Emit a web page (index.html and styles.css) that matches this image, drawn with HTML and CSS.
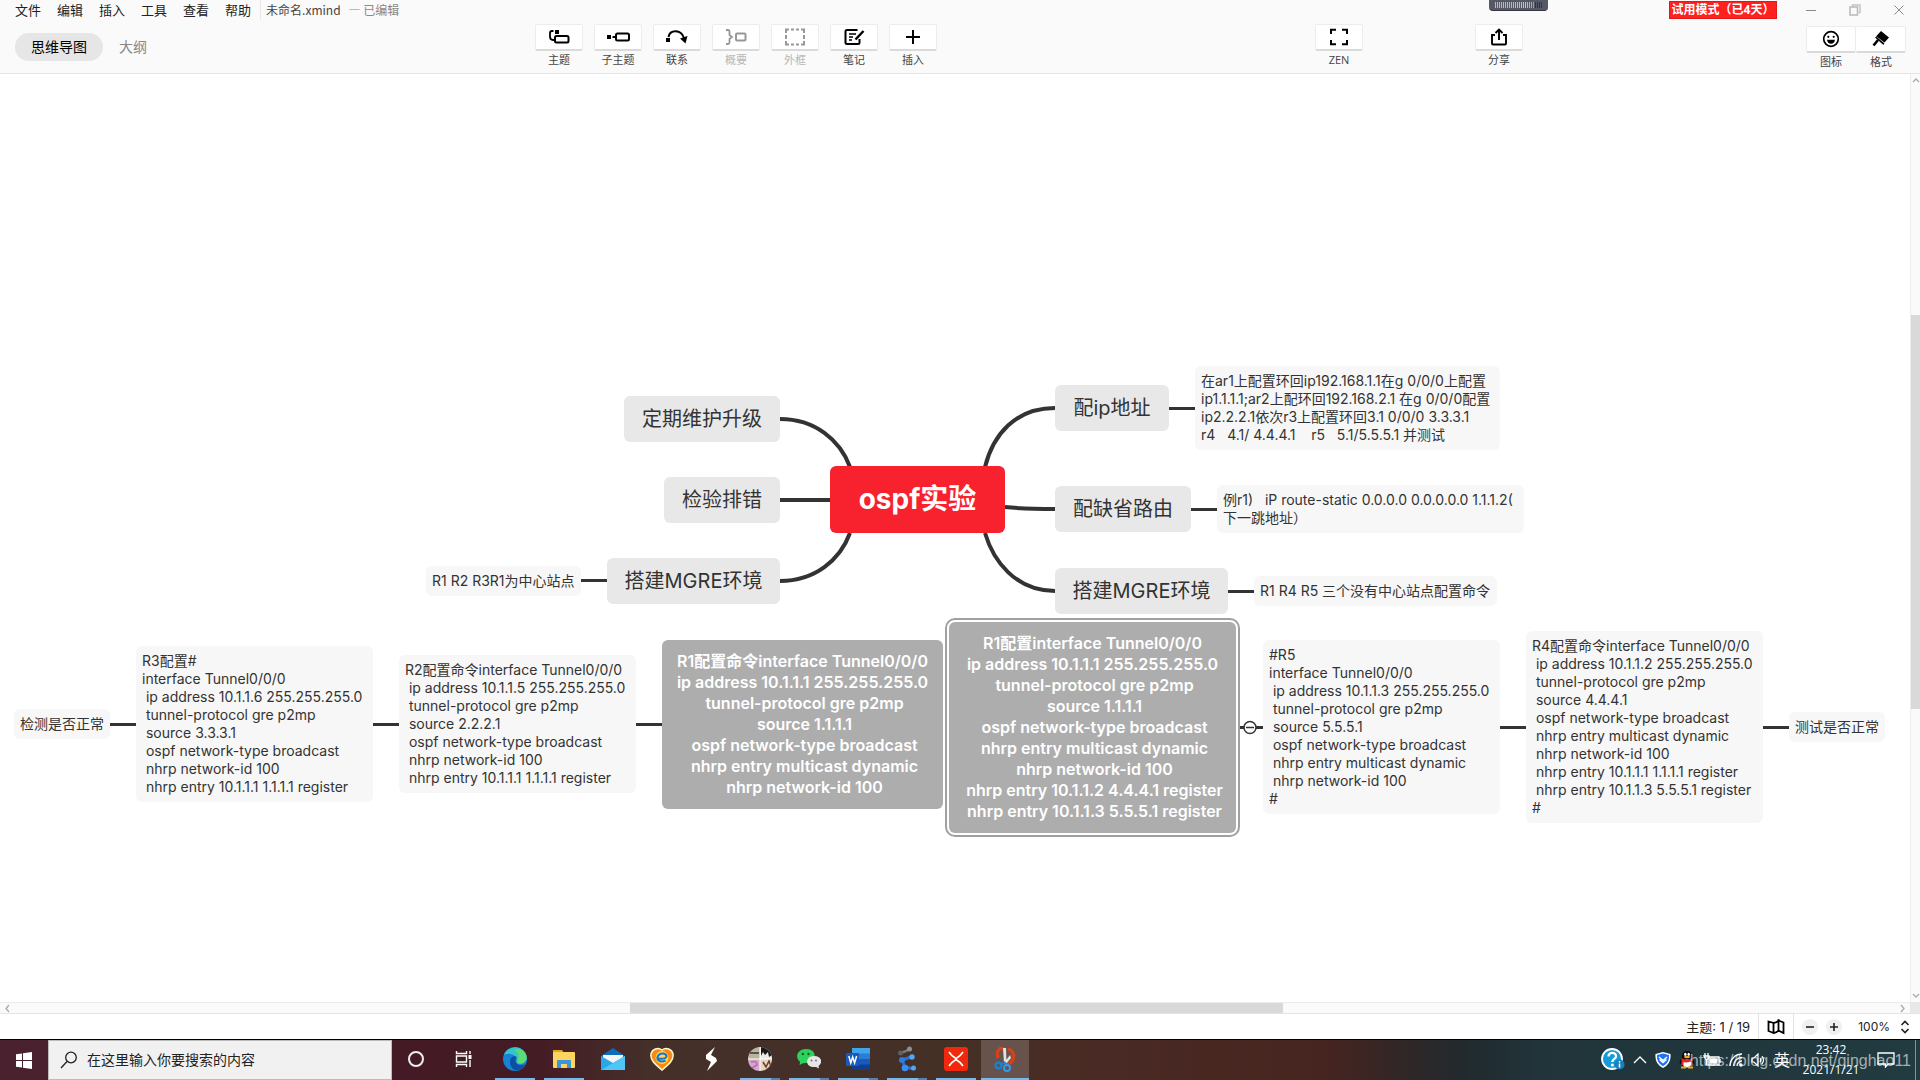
FILE: index.html
```html
<!DOCTYPE html>
<html lang="zh-CN">
<head>
<meta charset="utf-8">
<title>未命名.xmind</title>
<link rel="stylesheet" href="styles.css">
</head>
<body>
<header class="header">
  <div class="titlebar">
    <nav class="menus">
      <button>文件</button><button>编辑</button><button>插入</button><button>工具</button><button>查看</button><button>帮助</button>
    </nav>
    <div class="doc"><span>未命名.xmind</span><span class="edited">— 已编辑</span></div>
    <div class="meter" aria-hidden="true"><i></i></div>
    <button class="trial">试用模式（已4天）</button>
    <div class="window-buttons">
      <button aria-label="最小化"><svg width="12" height="12" viewBox="0 0 12 12"><path d="M1 6.500h10" stroke="#8a8a8a"/></svg></button>
      <button aria-label="还原"><svg width="12" height="12" viewBox="0 0 12 12"><path d="M3.500 2.500V1h7.500v7.500H9.500" fill="none" stroke="#c4c4c4" stroke-width="1.500"/><path d="M1 3h7.500v8H1z" fill="none" stroke="#b8b8b8" stroke-width="1.500"/></svg></button>
      <button aria-label="关闭"><svg width="12" height="12" viewBox="0 0 12 12"><path d="M1.500 1.500l9 9M10.500 1.500l-9 9" stroke="#8a8a8a"/></svg></button>
    </div>
  </div>
  <div class="toolbar">
    <div class="views"><button class="view active">思维导图</button><button class="view">大纲</button></div>
    <div class="tools">
      <button class="tool"><span class="key"><svg width="22" height="18" viewBox="0 0 22 18"><path d="M5.500 3H4q-2 0-2 2v3.500q0 3.500 3 3.500h1" fill="none" stroke="#000" stroke-width="1.800"/><rect x="7" y="2" width="4" height="4"/><rect x="7" y="8" width="13.500" height="6.500" rx="1.500" fill="none" stroke="#000" stroke-width="2"/></svg></span>主题</button>
      <button class="tool"><span class="key"><svg width="24" height="18" viewBox="0 0 24 18"><rect x="1" y="7" width="4" height="4"/><path d="M6.500 9H10" stroke="#000" stroke-width="2"/><rect x="10" y="5.500" width="13" height="7" rx="1.500" fill="none" stroke="#000" stroke-width="2"/></svg></span>子主题</button>
      <button class="tool"><span class="key"><svg width="22" height="18" viewBox="0 0 22 18"><rect x="0" y="10" width="4" height="4"/><path d="M2.500 9C4 1.500 15 1 18 10" fill="none" stroke="#000" stroke-width="2"/><path d="M14 10.500l7.500-2.500-2 7.500z"/></svg></span>联系</button>
      <button class="tool" disabled><span class="key"><svg width="22" height="18" viewBox="0 0 22 18"><path d="M1 2h2q1.500 0 1.500 1.500V7L7 9l-2.500 2v3.500Q4.500 16 3 16H1" fill="none" stroke="#000" stroke-width="1.800"/><rect x="11" y="5.500" width="9.500" height="7" rx="1" fill="none" stroke="#000" stroke-width="2"/></svg></span>概要</button>
      <button class="tool" disabled><span class="key"><svg width="22" height="18" viewBox="0 0 22 18"><path d="M5 1.500H2V5M2 7v4M2 13v3.500h3M7 16.500h3M12 16.500h3M17 16.500h3V13M20 11V7M20 5V1.500h-3M15 1.500h-3M10 1.500H7" fill="none" stroke="#000" stroke-width="2"/></svg></span>外框</button>
      <button class="tool"><span class="key"><svg width="22" height="18" viewBox="0 0 22 18"><path d="M14.500 2H4Q2.500 2 2.500 3.500v11Q2.500 16 4 16h11q1.500 0 1.500-1.500V11" fill="none" stroke="#000" stroke-width="2"/><path d="M6 6h7M6 9h4M6 12h3" stroke="#000" stroke-width="1.700"/><path d="M20.500 3l-8 8.500" stroke="#000" stroke-width="2.400"/></svg></span>笔记</button>
      <button class="tool"><span class="key"><svg width="18" height="18" viewBox="0 0 18 18"><path d="M9 2v14M2 9h14" stroke="#000" stroke-width="2"/></svg></span>插入</button>
    </div>
    <button class="tool"><span class="key"><svg width="20" height="18" viewBox="0 0 20 18"><path d="M7 1.800H2V6M13 1.800h5V6M2 12v4.200h5M18 12v4.200h-5" fill="none" stroke="#000" stroke-width="2"/></svg></span>ZEN</button>
    <button class="tool"><span class="key"><svg width="18" height="18" viewBox="0 0 18 18"><path d="M5 7H2v8.500q0 1 1 1h12q1 0 1-1V7h-3M9 12V2M5.500 5L9 1.500 12.500 5" fill="none" stroke="#000" stroke-width="1.900"/></svg></span>分享</button>
    <div class="panels">
      <button class="tool"><span class="key"><svg width="18" height="18" viewBox="0 0 18 18"><circle cx="9" cy="9" r="7.300" fill="none" stroke="#000" stroke-width="1.700"/><circle cx="6.300" cy="6.800" r="1.100"/><circle cx="11.700" cy="6.800" r="1.100"/><path d="M5 9.800h8q-.6 4-4 4t-4-4z"/></svg></span>图标</button>
      <button class="tool"><span class="key"><svg width="18" height="18" viewBox="0 0 18 18"><path d="M9 1l8 6.500-5 5.500-8-6.500zM3 7.500L11.500 15l1-2.500-8-6z"/><path d="M6 10l-4.500 5.500" stroke="#000" stroke-width="2.600"/></svg></span>格式</button>
    </div>
  </div>
</header>

<main class="workspace">
  <div class="board">
    <svg class="links" fill="none" stroke="#333">
      <g stroke-width="4">
        <path d="M780 345C815 345 840 366 850 393M780 426h50M780 507C815 507 840 486 850 459M985 393C993 361 1015 334 1055 334M1005 433Q1025 435 1055 435M985 459C993 486 1015 517 1055 517"/>
      </g>
      <path stroke-width="3" d="M581 506.500h26M1169 334.500h26M1191 435.500h26M1228 517.500h26M110 650.500h26M373 650.500h26M636 650.500h26M1240 653.500h23M1500 653.500h26M1763 653.500h26"/>
      <circle cx="1250" cy="653.500" r="6" fill="#fff" stroke-width="1.500"/>
      <path d="M1246 653.500h8" stroke-width="1.500"/>
    </svg>
    <div class="node central n-root">ospf实验</div>
    <div class="node topic n-upgrade">定期维护升级</div>
    <div class="node topic n-check">检验排错</div>
    <div class="node topic n-mgre-left">搭建MGRE环境</div>
    <div class="node topic n-ip">配ip地址</div>
    <div class="node topic n-route">配缺省路由</div>
    <div class="node topic n-mgre-right">搭建MGRE环境</div>
    <div class="node leaf n-hub">R1 R2 R3R1为中心站点</div>
    <div class="node leaf n-ip-note">在ar1上配置环回ip192.168.1.1在g 0/0/0上配置
ip1.1.1.1;ar2上配环回192.168.2.1 在g 0/0/0配置
ip2.2.2.1依次r3上配置环回3.1 0/0/0 3.3.3.1
r4   4.1/ 4.4.4.1    r5   5.1/5.5.5.1 并测试</div>
    <div class="node leaf n-route-note">例r1)   iP route-static 0.0.0.0 0.0.0.0.0 1.1.1.2(
下一跳地址）</div>
    <div class="node leaf n-spokes">R1 R4 R5 三个没有中心站点配置命令</div>
    <div class="node leaf n-test-left">检测是否正常</div>
    <div class="node leaf n-r3">R3配置#
interface Tunnel0/0/0
 ip address 10.1.1.6 255.255.255.0
 tunnel-protocol gre p2mp
 source 3.3.3.1
 ospf network-type broadcast
 nhrp network-id 100
 nhrp entry 10.1.1.1 1.1.1.1 register</div>
    <div class="node leaf n-r2">R2配置命令interface Tunnel0/0/0
 ip address 10.1.1.5 255.255.255.0
 tunnel-protocol gre p2mp
 source 2.2.2.1
 ospf network-type broadcast
 nhrp network-id 100
 nhrp entry 10.1.1.1 1.1.1.1 register</div>
    <div class="node floating n-r1-left">R1配置命令interface Tunnel0/0/0
ip address 10.1.1.1 255.255.255.0
 tunnel-protocol gre p2mp
 source 1.1.1.1
 ospf network-type broadcast
 nhrp entry multicast dynamic
 nhrp network-id 100</div>
    <div class="node floating selected n-r1-right">R1配置interface Tunnel0/0/0
ip address 10.1.1.1 255.255.255.0
 tunnel-protocol gre p2mp
 source 1.1.1.1
 ospf network-type broadcast
 nhrp entry multicast dynamic
 nhrp network-id 100
 nhrp entry 10.1.1.2 4.4.4.1 register
 nhrp entry 10.1.1.3 5.5.5.1 register</div>
    <div class="node leaf n-r5">#R5
interface Tunnel0/0/0
 ip address 10.1.1.3 255.255.255.0
 tunnel-protocol gre p2mp
 source 5.5.5.1
 ospf network-type broadcast
 nhrp entry multicast dynamic
 nhrp network-id 100
#</div>
    <div class="node leaf n-r4">R4配置命令interface Tunnel0/0/0
 ip address 10.1.1.2 255.255.255.0
 tunnel-protocol gre p2mp
 source 4.4.4.1
 ospf network-type broadcast
 nhrp entry multicast dynamic
 nhrp network-id 100
 nhrp entry 10.1.1.1 1.1.1.1 register
 nhrp entry 10.1.1.3 5.5.5.1 register
#</div>
    <div class="node leaf n-test-right">测试是否正常</div>
  </div>
  <div class="scroll vertical">
    <svg width="8" height="12" viewBox="0 0 8 12"><path d="M1 8l3-3 3 3"/></svg>
    <div class="track"><span></span><i></i><span></span></div>
    <svg width="8" height="12" viewBox="0 0 8 12"><path d="M1 4l3 3 3-3"/></svg>
  </div>
  <div class="scroll horizontal">
    <svg width="14" height="9" viewBox="0 0 14 9"><path d="M9 1L6 4.500 9 8"/></svg>
    <div class="track"><span></span><i></i><span></span></div>
    <svg width="14" height="9" viewBox="0 0 14 9"><path d="M5 1l3 3.500L5 8"/></svg>
  </div>
  <div class="corner"></div>
</main>

<footer class="status">
  <span class="count">主题: 1 / 19</span>
  <button class="map-button" aria-label="导航图"><svg width="18" height="16" viewBox="0 0 18 16"><path d="M1.500 2.500L6.500 4v10l-5-2zM6.500 4q3 0 5-2.500v10q-2 2.500-5 2.500M11.500 1.500l5 2V14l-5-2.500z" fill="none" stroke="#000" stroke-width="1.800"/></svg></button>
  <button class="zoom" aria-label="缩小"><svg width="10" height="10" viewBox="0 0 10 10"><path d="M1 5h8" stroke="#222" stroke-width="1.600"/></svg></button>
  <button class="zoom" aria-label="放大"><svg width="10" height="10" viewBox="0 0 10 10"><path d="M1 5h8M5 1v8" stroke="#222" stroke-width="1.600"/></svg></button>
  <button class="percent">100%<svg width="10" height="14" viewBox="0 0 10 14"><path d="M1.500 5L5 1.500 8.500 5M1.500 9L5 12.500 8.500 9" fill="none" stroke="#222" stroke-width="1.600"/></svg></button>
</footer>

<div class="taskbar">
  <button class="start" aria-label="开始"><svg width="16" height="17" viewBox="0 0 16 17" fill="#fff"><path d="M0 2.300L6 1.500V8H0zM7 1.300L16 0v8H7zM0 9h6v6.500l-6-.8zM7 9h9v8l-9-1.300z"/></svg></button>
  <label class="search"><svg width="18" height="18" viewBox="0 0 18 18" fill="none" stroke="#222" stroke-width="1.300"><circle cx="11" cy="6.500" r="5.300"/><path d="M7 10.500L1 17"/></svg><input type="text" placeholder="在这里输入你要搜索的内容" aria-label="搜索"></label>
  <button class="task" aria-label="Cortana"><svg width="18" height="18" viewBox="0 0 18 18"><circle cx="9" cy="9" r="7" fill="none" stroke="#eee" stroke-width="2"/></svg></button>
  <button class="task" aria-label="任务视图"><svg width="18" height="18" viewBox="0 0 18 18" fill="none" stroke="#fff" stroke-width="1.400"><path d="M1.500 1v2.500h10V1M1.500 17v-2.500h10V17M1.500 6h10v6h-10zM15 1v3M15 10v7"/><path d="M15 5v4" stroke-width="3"/></svg></button>
  <div class="apps">
    <button class="task open" aria-label="Edge"><svg width="24" height="26" viewBox="0 0 24 26"><circle cx="12" cy="13" r="12" fill="#1683d8"/><path d="M1 9C5-1 20-2 23.500 10c1 6-3 8-7 8-3 0-4-2-2.500-4C14 9 6 6 1 9z" fill="#37c6c8"/><path d="M15 3c6 1 9 5 8.600 9-.4 4-4 6-7.600 5-3-1-1-3-.5-5 1-4-1-6-4-8z" fill="#5fdc6e"/><path d="M7 16c0-5 4-7 7-5-2 1-3 6 2 8 3 1 6-1 6.500-1-3 6-8 7-11 6-3-2-4.500-4-4.500-8z" fill="#0d4fa0"/></svg></button>
    <button class="task open" aria-label="文件资源管理器"><svg width="24" height="20" viewBox="0 0 24 20"><path d="M1 1h9l2 3H1z" fill="#e8a317"/><rect x="1" y="3" width="22" height="16" rx="1" fill="#fcd45f"/><path d="M5 19v-7q0-1 1-1h12q1 0 1 1v7h-4v-4H9v4z" fill="#3c95db"/></svg></button>
    <button class="task" aria-label="邮件"><svg width="24" height="22" viewBox="0 0 24 22"><path d="M0 8L12 0l12 8v14H0z" fill="#0f6cbd"/><path d="M2 7h20v10H2z" fill="#f4f4f4"/><path d="M0 8l12 7L24 8v14H0z" fill="#28a8ea"/><path d="M0 22L24 8v14z" fill="#4fc6f5"/></svg></button>
    <button class="task" aria-label="浏览器"><svg width="24" height="24" viewBox="0 0 24 24"><path d="M12 23C5 17 0 13 1 7c1-5 7-7 11-4 4-3 10-1 11 4 1 6-4 10-11 16z" fill="#f88a12" stroke="#fff3cf" stroke-width="1.500"/><circle cx="12" cy="10.500" r="6.500" fill="#ffd44b"/><path d="M8 11.500q7.500 1 8.500-2c0-3.500-6-4.500-8.500-.5-2 4 2 7 7.500 4.500" fill="none" stroke="#1775cf" stroke-width="2"/></svg></button>
    <button class="task" aria-label="Steam++"><svg width="12" height="24" viewBox="0 0 12 24"><path d="M10 0L1 8v4l5 3-4 9 10-10-1-3-5-3z" fill="#fff"/></svg></button>
    <button class="task open multi" aria-label="相册"><svg width="24" height="24" viewBox="0 0 24 24"><clipPath id="round"><circle cx="12" cy="12" r="12"/></clipPath><g clip-path="url(#round)"><path fill="#b9b59c" d="M0 0h12v12H0z"/><path fill="#e9e9e9" d="M12 0h12v12H12z"/><path fill="#d8a5cf" d="M0 12h12v12H0z"/><path fill="#e7d2bc" d="M12 12h12v12H12z"/><path fill="#555" d="M2 5h9v2H2z"/><path fill="#171717" d="M13 0h9l2 8-3 2-1-5-3 3-2-3-2 4z"/><path d="M3 15q6-2 6 3l-5 3" fill="none" stroke="#b070b0" stroke-width="1.500"/><path d="M15 15l3 5 3-6 2 6" fill="none" stroke="#6d3c2f" stroke-width="1.500"/><path d="M12 0v24M0 12h24" stroke="#fff"/></g></svg></button>
    <button class="task open multi" aria-label="微信"><svg width="24" height="20" viewBox="0 0 24 20"><path d="M9 0c12 0 11 14 0 14l-3 .3L2.500 16l.6-3C-3 8 1 0 9 0z" fill="#2ed15c"/><circle cx="5.800" cy="5" r="1.200" fill="#145e2c"/><circle cx="11.500" cy="5" r="1.200" fill="#145e2c"/><path d="M17 7c8 0 9 7 4.500 10l.5 2.500-3-1.500C7 19 8 7 17 7z" fill="#e6e6e6"/><circle cx="14.500" cy="11.500" r="1" fill="#777"/><circle cx="19" cy="11.500" r="1" fill="#777"/></svg></button>
    <button class="task open multi" aria-label="Word"><svg width="24" height="22" viewBox="0 0 24 22"><path fill="#41a5ee" d="M6 0h18v6H6z"/><path fill="#2b7cd3" d="M6 5.500h18V11H6z"/><path fill="#185abd" d="M6 11h18v6H6z"/><path fill="#103f91" d="M6 16.500h18V22H6z"/><rect y="5" width="13" height="13" rx="1" fill="#185abd"/><path d="M2.800 8l2 7 1.900-6 1.900 6 2-7" fill="none" stroke="#fff" stroke-width="1.500"/></svg></button>
    <button class="task open multi" aria-label="eNSP"><svg width="20" height="26" viewBox="0 0 20 26"><path d="M3 7q5-1 10-4" stroke="#777" stroke-width="2.500"/><circle cx="3.500" cy="7" r="2.500" fill="#5d6165"/><circle cx="12.500" cy="3" r="2.500" fill="#8c9093"/><path d="M14 11L5 14l3 7 9 2" fill="none" stroke="#2d6fd0" stroke-width="3"/><circle cx="15" cy="11" r="2.700" fill="#59a4f2"/><circle cx="5" cy="14" r="3" fill="#2d7de0"/><circle cx="8" cy="22" r="3.300" fill="#3b8dee"/><circle cx="16.500" cy="22" r="2.500" fill="#59a4f2"/></svg></button>
    <button class="task open" aria-label="XMind"><svg width="24" height="24" viewBox="0 0 24 24"><rect width="24" height="24" rx="3" fill="#f2280c"/><path d="M5 5q2 3.500 7 6.500 5-3 7-6.500M5 19q2-3.500 7-6.500 5 3 7 6.500" fill="none" stroke="#fff" stroke-width="1.600"/></svg></button>
    <button class="task open current" aria-label="截图工具"><svg width="22" height="26" viewBox="0 0 22 26"><path d="M4 12C2 5 5 1 10 3M14 3c8 2 8 15-3 15" fill="none" stroke="#d0431c" stroke-width="3.500"/><path d="M9 2l1 15h2.500L12 2zM16 9l-6 8 1.500 1.500L17 12z" fill="#e2e2e2"/><path d="M11 16l-4 3M10 16l4 4" stroke="#1683d8" stroke-width="2"/><circle cx="4.500" cy="19.500" r="3" fill="none" stroke="#1683d8" stroke-width="2"/><circle cx="13" cy="22" r="3" fill="none" stroke="#2c9cf0" stroke-width="2"/></svg></button>
  </div>
  <div class="tray">
    <svg width="24" height="24" viewBox="0 0 24 24"><circle cx="11" cy="11" r="10" fill="#159bd7" stroke="#fff" stroke-width="1.800"/><path d="M7.500 8.500c0-5 8-4.500 7.500 0-.2 2.500-3.700 2.500-3.700 5.500" fill="none" stroke="#fff" stroke-width="2.300"/><circle cx="11.300" cy="17" r="1.500" fill="#fff"/><circle cx="18.500" cy="16.500" r="5" fill="#1682bd"/><path d="M18.500 15.500v4M18.500 13v1.500" stroke="#fff" stroke-width="1.500"/></svg>
    <svg width="14" height="8" viewBox="0 0 14 8"><path d="M1 7l6-6 6 6" fill="none" stroke="#fff" stroke-width="1.400"/></svg>
    <svg width="16" height="16" viewBox="0 0 16 16"><path d="M8 0l7.500 2q1 10-7.500 14Q-.5 12 .5 2z" fill="#fff"/><path d="M8 1.500l6 1.600q.7 7.600-6 11.200Q1.300 10.700 2 3.100z" fill="#1e73f0"/><path d="M4 5l4 3.500L12 5M4.500 7.500L8 10.500l3.500-3" fill="none" stroke="#fff" stroke-width="1.400"/></svg>
    <svg width="16" height="18" viewBox="0 0 16 18"><path d="M8 0c5 0 5 5 5 7 2 2 3 5 2 6l-2-1v3H3v-3l-2 1c-1-1 0-4 2-6 0-2 0-7 5-7z" fill="#0b0b0b"/><ellipse cx="8" cy="12.500" rx="4.300" ry="4" fill="#fff"/><path d="M2.500 7q5.500 3 11 0v2.500q-5 3-9 1.500v3h-2z" fill="#e3242b"/><ellipse cx="6.300" cy="3.300" rx="1.200" ry="1.600" fill="#fff"/><ellipse cx="9.700" cy="3.300" rx="1.200" ry="1.600" fill="#fff"/><ellipse cx="8" cy="6" rx="3" ry="1.200" fill="#f7a81b"/><path d="M2 16.500h5M9 16.500h5" stroke="#f7a81b" stroke-width="2"/></svg>
    <svg width="18" height="14" viewBox="0 0 18 14" fill="none" stroke="#fff" stroke-width="1.300"><path d="M5 4h11v8H5z"/><path d="M7 6h7v4H7z" fill="#fff"/><path d="M17 6v4M2 0v3M5 0v3M1 3h5v2L3.500 7zM3.500 7v5"/></svg>
    <svg width="14" height="14" viewBox="0 0 14 14" fill="none" stroke="#fff" stroke-width="1.300"><path d="M1 13A12 12 0 0 1 13 1M4.500 13A8.500 8.500 0 0 1 13 4.500M8 13a5 5 0 0 1 5-5"/><circle cx="12" cy="12" r="1" fill="#fff"/></svg>
    <svg width="14" height="14" viewBox="0 0 14 14" fill="none" stroke="#fff" stroke-width="1.200"><path d="M1 5h2l4-4v12L3 9H1zM9 5q1.500 2 0 4M11 3q3 4 0 8"/></svg>
    <span class="ime">英</span>
    <time class="clock"><span>23:42</span><span>2021/1/21</span></time>
    <svg class="notice" width="18" height="16" viewBox="0 0 18 16"><path d="M1 1h16v11h-6l-2.500 3V12H1z" fill="none" stroke="#fff" stroke-width="1.300"/></svg>
    <i class="peek"></i>
  </div>
  <div class="watermark">https://blog.csdn.net/qinghao11</div>
</div>
</body>
</html>
```
FILE: styles.css
```css
* { box-sizing: border-box; }
html, body { height: 100%; }
body {
  margin: 0;
  display: flex;
  flex-direction: column;
  overflow: hidden;
  background: #fff;
  color: #222;
  font: 13px/20px "Open Sans", "Noto Sans CJK SC", sans-serif;
}
button { margin: 0; padding: 0; border: 0; background: none; color: inherit; font: inherit; white-space: nowrap; }
svg { display: block; flex: none; }

/* header */
.header { flex: none; background: #fafafa; border-bottom: 1px solid #e4e4e4; }
.titlebar { display: flex; align-items: flex-start; height: 20px; }
.menus { display: flex; gap: 16px; padding-left: 15px; }
.doc { display: flex; gap: 8px; margin-left: 9px; padding-left: 5px; border-left: 1px solid #e8e8e8; font-family: "Noto Sans CJK SC", sans-serif; font-size: 12px; color: #444; }
.edited { color: #888; }
.meter { width: 59px; height: 11px; margin-left: auto; margin-right: 121px; padding: 2px 6px; border-radius: 0 0 4px 4px; background: #565865; border-bottom: 1px solid #353743; }
.meter i { display: block; height: 6px; background: repeating-linear-gradient(90deg, transparent 0 1px, #565865 1px 2px), linear-gradient(90deg, #62e0e0, #7fdc8c 40%, #e8c860 65%, #e87a50 84%, #33353d 85%); }
.trial { width: 108px; height: 18px; margin-top: 1px; background: #ff2020; border: 1px solid #e01818; color: #fff; font-size: 12px; font-weight: 700; line-height: 16px; overflow: hidden; }
.window-buttons { display: flex; gap: 32px; padding: 4px 15px 0 28px; }
.toolbar { display: grid; grid-template-columns: 535fr 780fr 160fr 331fr 114fr; height: 53px; padding-top: 4px; align-items: start; justify-items: start; }
.views { display: flex; padding: 9px 0 0 15px; }
.view { height: 28px; padding: 0 16px; border-radius: 14px; color: #888; font-size: 14px; }
.view.active { background: #e6e6e6; color: #000; }
.tools { display: flex; gap: 11px; }
.tool { display: flex; flex-direction: column; align-items: center; color: #444; font-size: 11px; line-height: 18px; }
.key { display: flex; align-items: center; justify-content: center; width: 48px; height: 27px; background: #fff; border: 1px solid #ececec; border-bottom: 2px solid #dadada; border-radius: 2px; }
.tool:disabled { color: #b8b8b8; }
.tool:disabled svg { opacity: .4; }
.panels { display: flex; padding-top: 2px; }
.panels .key { width: 50px; }
.panels .tool + .tool .key { border-left: 0; }

/* canvas */
.workspace { flex: 1; min-height: 0; display: grid; grid-template: minmax(0, 1fr) 11px / minmax(0, 1fr) 10px; }
.board { position: relative; overflow: hidden; font-family: Inter, "Noto Sans CJK SC", sans-serif; color: #333; }
.links { position: absolute; inset: 0; width: 100%; height: 100%; }
.node { position: absolute; white-space: pre; border-radius: 6px; }
.leaf { padding: 6px; background: #f7f7f7; font-size: 14px; line-height: 18px; }
.topic { padding: 8px 0; background: #e8e8e8; text-align: center; font-size: 20px; line-height: 30px; }
.central { padding: 13px 0; background: #f8222e; color: #fff; text-align: center; font-size: 28px; font-weight: 700; line-height: 41px; }
.floating { padding: 11px 0; background: #adadad; color: #fff; text-align: center; font-size: 16px; font-weight: 600; line-height: 21px; }
.selected { outline: 2px solid #a0a0a0; outline-offset: 2px; }
.n-root { left: 830px; top: 392px; width: 175px; }
.n-upgrade { left: 624px; top: 322px; width: 156px; }
.n-check { left: 664px; top: 403px; width: 116px; }
.n-mgre-left { left: 607px; top: 484px; width: 173px; }
.n-ip { left: 1055px; top: 311px; width: 114px; }
.n-route { left: 1055px; top: 412px; width: 136px; }
.n-mgre-right { left: 1055px; top: 494px; width: 173px; }
.n-hub { left: 426px; top: 492px; width: 155px; }
.n-ip-note { left: 1195px; top: 292px; width: 305px; }
.n-route-note { left: 1217px; top: 411px; width: 307px; }
.n-spokes { left: 1254px; top: 502px; width: 243px; }
.n-test-left { left: 14px; top: 635px; width: 96px; }
.n-r3 { left: 136px; top: 572px; width: 237px; }
.n-r2 { left: 399px; top: 581px; width: 237px; }
.n-r1-left { left: 662px; top: 566px; width: 281px; }
.n-r1-right { left: 949px; top: 548px; width: 287px; }
.n-r5 { left: 1263px; top: 566px; width: 237px; }
.n-r4 { left: 1526px; top: 557px; width: 237px; }
.n-test-right { left: 1789px; top: 638px; width: 96px; }

.scroll { display: flex; background: #fafafa; }
.scroll svg { fill: none; stroke: #aaa; stroke-width: 1.3; }
.vertical { flex-direction: column; align-items: center; border-left: 1px solid #ececec; }
.horizontal { align-items: center; border-top: 1px solid #ececec; }
.track { flex: 1; display: flex; align-self: stretch; }
.vertical .track { flex-direction: column; }
.track i { background: #d9d9d9; }
.vertical .track span:first-child { flex: 229; }
.vertical .track i { flex: 395; }
.vertical .track span:last-child { flex: 281; }
.horizontal .track span:first-child { flex: 616; }
.horizontal .track i { flex: 653; }
.horizontal .track span:last-child { flex: 613; }
.corner { background: #e8e8e8; }

/* status bar */
.status { flex: none; display: flex; align-items: center; justify-content: flex-end; height: 26px; border-top: 1px solid #e4e4e4; background: #fff; font-family: Inter, "Noto Sans CJK SC", sans-serif; font-size: 12px; }
.count { margin-right: 8px; font-size: 13px; }
.map-button { display: flex; align-items: center; justify-content: center; align-self: stretch; width: 36px; margin-right: 8px; border: solid #e4e4e4; border-width: 0 1px; }
.zoom { display: flex; align-items: center; justify-content: center; width: 16px; height: 16px; margin-right: 8px; border-radius: 50%; background: #f0f0f0; }
.percent { display: flex; align-items: center; gap: 10px; padding: 0 10px 0 8px; }

/* taskbar */
.taskbar {
  position: relative;
  flex: none;
  display: flex;
  height: 41px;
  border-top: 1px solid #000;
  background: linear-gradient(90deg, #4a222f, #431a25 20%, #441c24 28%, #44302a 34%, #453026 50%, #4a2a24 58%, #46241f 69%, #22292d 76%, #20343a 80%, #213b40);
  color: #fff;
}
.start { display: flex; align-items: center; justify-content: center; width: 48px; }
.search { display: flex; align-items: center; gap: 9px; width: 344px; padding-left: 11px; background: #f1f1f1; border: 1px solid #bbb; }
.search input { flex: 1; min-width: 0; padding: 0; border: 0; outline: 0; background: none; font: 14px/20px "Open Sans", "Noto Sans CJK SC", sans-serif; }
.search input::placeholder { color: #222; opacity: 1; }
.task { display: flex; align-items: center; justify-content: center; width: 48px; border-bottom: 2px solid transparent; }
.apps { display: flex; gap: 1px; margin-left: 3px; }
.open { background: linear-gradient(#76b9ed, #76b9ed) center bottom / 40px 2px no-repeat border-box; }
.multi { background-image: linear-gradient(90deg, #76b9ed 31px, #5484ad 31px); }
.current { background: linear-gradient(#76b9ed, #76b9ed) center bottom / 100% 2px no-repeat border-box, #67524c; }
.tray { display: flex; align-items: center; gap: 8px; margin-left: auto; padding-right: 4px; }
.ime { margin: 0 3px 0 1px; font-size: 16px; }
.clock { display: flex; flex-direction: column; align-items: center; width: 60px; margin-right: 8px; font-size: 12px; }
.notice { margin-right: 12px; }
.peek { align-self: stretch; border-left: 1px solid #879599; }
.watermark { position: absolute; right: 9px; top: 11px; font: 16px/20px "Liberation Sans", sans-serif; color: rgba(255, 255, 255, .6); }
```
